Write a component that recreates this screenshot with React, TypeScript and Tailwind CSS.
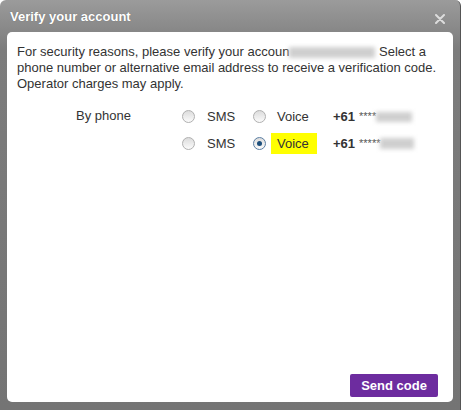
import React from "react";

function Radio({ checked = false }: { checked?: boolean }) {
  return (
    <span
      className={
        "relative inline-block w-[13px] h-[13px] rounded-full border bg-gradient-to-b from-[#dcdcdc] to-[#fbfbfb] " +
        (checked ? "border-[#5b7ea3]" : "border-[#b0b0b0]")
      }
    >
      {checked && (
        <span className="absolute left-[3px] top-[3px] w-[5px] h-[5px] rounded-full bg-[#1d4f7c]" />
      )}
    </span>
  );
}

function Blur({ className }: { className: string }) {
  return <span className={"inline-block bg-[#cfcfcf] blur-[2px] " + className} />;
}

function PhoneRow({ voiceChecked, stars, highlight }: { voiceChecked?: boolean; stars: string; highlight?: boolean }) {
  return (
    <div className="flex items-center h-[27px]">
      <Radio />
      <span className="ml-[12px] w-[46px]">SMS</span>
      <Radio checked={voiceChecked} />
      <span className={"ml-[5px] pl-[6px] w-[46px] h-[21px] flex items-center " + (highlight ? "bg-[#ffff00]" : "")}>
        Voice
      </span>
      <span className="ml-[16px] font-bold">+61</span>
      <span className="ml-[4px] text-[11px] text-[#555] self-start mt-[5px]">{stars}</span>
      <Blur className={highlight ? "w-[34px] h-[11px]" : "w-[36px] h-[10px]"} />
    </div>
  );
}

export default function App() {
  return (
    <div className="w-[462px] h-[410px] bg-white font-['Liberation_Sans',Arial,sans-serif]">
      <div className="w-[461px] h-[410px] rounded-t-[6px] bg-gradient-to-b from-[#9b9b9b] via-[#7c7c7c] via-[12%] to-[#747474] flex flex-col border-r border-[#555]">
        <div className="h-[32px] flex items-start justify-between pl-[10px] pr-[15px]">
          <span className="mt-[7px] text-white font-bold text-[13px] [text-shadow:0_0_1px_rgba(0,0,0,0.3)]">
            Verify your account
          </span>
          <svg className="mt-[14px]" width="10" height="10" viewBox="0 0 10 10">
            <path d="M1 1 L9 9 M9 1 L1 9" stroke="#dcdcdc" strokeWidth="2" strokeLinecap="round" />
          </svg>
        </div>
        <div className="mx-[7px] mb-[8px] flex-1 bg-white rounded-[5px] flex flex-col px-[10px] pt-[12px] pb-[5px] text-[13px] text-[#333]">
          <p className="leading-[16px]">
            For security reasons, please verify your accoun
            <Blur className="w-[86px] h-[11px] align-middle" /> Select a phone number or alternative email address to
            receive a verification code. Operator charges may apply.
          </p>
          <div className="flex mt-[11px]">
            <span className="ml-[59px] w-[106px] mt-[3px]">By phone</span>
            <div className="flex flex-col">
              <PhoneRow stars="****" />
              <PhoneRow stars="*****" voiceChecked highlight />
            </div>
          </div>
          <div className="mt-auto flex justify-end pr-[5px]">
            <button className="bg-[#6d2c9f] text-white font-bold text-[13px] h-[23px] w-[88px] rounded-[2px]">
              Send code
            </button>
          </div>
        </div>
      </div>
    </div>
  );
}
